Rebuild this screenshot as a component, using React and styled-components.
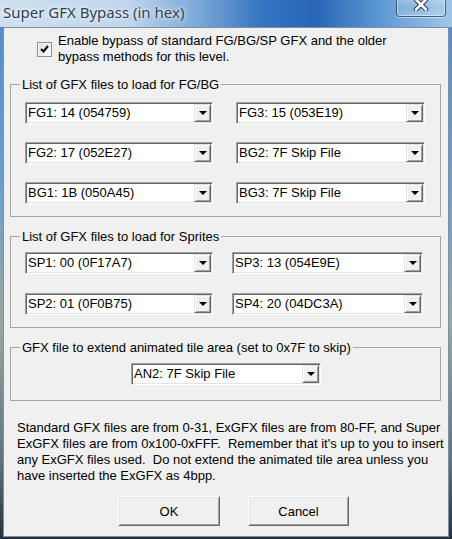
import React from "react";
import styled, { createGlobalStyle } from "styled-components";

const GlobalStyle = createGlobalStyle`
  *, *::before, *::after { box-sizing: border-box; }
  html, body { margin: 0; padding: 0; background: #5f8fbf; }
  body { font-family: "Liberation Sans", Arial, sans-serif; }
`;

const Window = styled.div`
  width: 452px;
  height: 539px;
  display: flex;
  flex-direction: column;
  padding: 0 3px 2px 3px;
  overflow: hidden;
  background: linear-gradient(180deg, #4f8ccb 0%, #6c9fcf 35%, #9aa79a 60%, #5f7585 85%, #24313c 100%);
`;

const TitleBar = styled.div`
  height: 27px;
  flex: none;
  margin: 0 -3px;
  padding: 0 3px;
  display: flex;
  justify-content: space-between;
  align-items: flex-start;
  background: linear-gradient(90deg, #cfe0f0 0%, #c0d6ec 28%, #7aa8d8 44%, #3474c0 58%, #2866b5 70%, #5d98d3 84%, #a0c7ea 100%);
`;

const Title = styled.span`
  font-family: "Noto Sans", "Open Sans", sans-serif;
  font-size: 15px;
  line-height: 24px;
  color: #2c3d50;
  text-shadow: 0 0 6px rgba(255, 255, 255, 0.9), 0 0 2px rgba(255, 255, 255, 0.9);
`;

const CloseButton = styled.div`
  width: 50px;
  height: 22px;
  margin-top: -5px;
  margin-right: 3px;
  padding-bottom: 4px;
  border: 1px solid rgba(25, 45, 75, 0.7);
  border-radius: 4px;
  box-shadow: inset 0 0 0 1px rgba(255, 255, 255, 0.45), 0 1px 0 rgba(255, 255, 255, 0.5);
  background: linear-gradient(180deg, rgba(255, 255, 255, 0.35), rgba(255, 255, 255, 0.12) 60%, rgba(255, 255, 255, 0.25));
  display: flex;
  align-items: center;
  justify-content: center;
`;

const Client = styled.div`
  flex: 1;
  display: flex;
  flex-direction: column;
  background: #f0f0f0;
  border: 1px solid #7d8fa3;
  padding: 5px 7px 0 6px;
  font-size: 13px;
  color: #000;
`;

const CheckRow = styled.label`
  display: flex;
  align-items: center;
  gap: 6px;
  padding-left: 27px;
`;

const CheckBox = styled.span`
  width: 15px;
  height: 15px;
  flex: none;
  border: 1px solid #8e8f8f;
  background: linear-gradient(135deg, #dcdcdc, #ffffff);
  box-shadow: inset 0 0 0 1px #f4f4f4;
  display: flex;
  align-items: center;
  justify-content: center;
`;

const CheckText = styled.span`
  line-height: 16px;
`;

const Group = styled.fieldset`
  margin: 12px 0 0 0;
  padding: ${(p) => p.$pt}px 14px ${(p) => p.$pb}px 14px;
  border: 1px solid #a5a5a5;
  min-width: 0;
  width: 431px;
`;

const Legend = styled.legend`
  margin-left: -5px;
  padding: 0 2px;
  line-height: 15px;
`;

const ComboGrid = styled.div`
  display: grid;
  grid-template-columns: ${(p) => p.$cols};
  column-gap: ${(p) => p.$colGap}px;
  row-gap: ${(p) => p.$rowGap}px;
`;

const Centered = styled.div`
  display: flex;
  justify-content: center;
  padding-left: 1px;
`;

const ComboBox = styled.div`
  width: ${(p) => p.$w}px;
  height: 22px;
  padding: 1px;
  display: flex;
  align-items: stretch;
  background: #fff;
  border: 1px solid;
  border-color: #a0a0a0 #ffffff #ffffff #a0a0a0;
  box-shadow: inset 1px 1px 0 #696969, inset -1px -1px 0 #e3e3e3;
`;

const ComboValue = styled.span`
  flex: 1;
  padding-left: 1px;
  line-height: 18px;
  white-space: nowrap;
  overflow: hidden;
`;

const DropButton = styled.span`
  width: 17px;
  flex: none;
  background: #f0f0f0;
  border: 1px solid;
  border-color: #e3e3e3 #696969 #696969 #e3e3e3;
  box-shadow: inset 1px 1px 0 #fff, inset -1px -1px 0 #a0a0a0;
  display: flex;
  align-items: center;
  justify-content: center;
`;

const Arrow = styled.span`
  width: 0;
  height: 0;
  border-left: 4px solid transparent;
  border-right: 4px solid transparent;
  border-top: 4px solid #000;
`;

const Note = styled.p`
  margin: 19px 0 0 0;
  padding-left: 7px;
  line-height: 16px;
  white-space: pre;
`;

const ButtonRow = styled.div`
  display: flex;
  gap: 28px;
  margin-top: 12px;
  padding-left: 108px;
`;

const Button = styled.button`
  width: ${(p) => p.$w}px;
  height: 30px;
  font-family: "Liberation Sans", Arial, sans-serif;
  font-size: 13px;
  color: #000;
  background: #f0f0f0;
  border: 1px solid;
  border-color: #ffffff #696969 #696969 #ffffff;
  box-shadow: inset 1px 1px 0 #e3e3e3, inset -1px -1px 0 #a0a0a0;
  padding: 0;
`;

const Combo = ({ value, w }) => (
  <ComboBox $w={w}>
    <ComboValue>{value}</ComboValue>
    <DropButton>
      <Arrow />
    </DropButton>
  </ComboBox>
);

const fgbg = [
  "FG1: 14 (054759)",
  "FG3: 15 (053E19)",
  "FG2: 17 (052E27)",
  "BG2: 7F Skip File",
  "BG1: 1B (050A45)",
  "BG3: 7F Skip File",
];

const sprites = [
  "SP1: 00 (0F17A7)",
  "SP3: 13 (054E9E)",
  "SP2: 01 (0F0B75)",
  "SP4: 20 (04DC3A)",
];

const note = `Standard GFX files are from 0-31, ExGFX files are from 80-FF, and Super
ExGFX files are from 0x100-0xFFF.  Remember that it's up to you to insert
any ExGFX files used.  Do not extend the animated tile area unless you
have inserted the ExGFX as 4bpp.`;

export default function App() {
  return (
    <>
      <GlobalStyle />
      <Window>
        <TitleBar>
          <Title>Super GFX Bypass (in hex)</Title>
          <CloseButton>
            <svg width="16" height="13" viewBox="0 0 16 13">
              <path d="M3 1.5 L13 11.5 M13 1.5 L3 11.5" stroke="#2a3a4e" strokeWidth="4.6" strokeLinecap="round" />
              <path d="M3 1.5 L13 11.5 M13 1.5 L3 11.5" stroke="#ffffff" strokeWidth="2.6" strokeLinecap="round" />
            </svg>
          </CloseButton>
        </TitleBar>
        <Client>
          <CheckRow>
            <CheckBox>
              <svg width="9" height="8" viewBox="0 0 9 8">
                <path d="M1 4 L3.5 6.5 L8 1" stroke="#000" strokeWidth="2" fill="none" />
              </svg>
            </CheckBox>
            <CheckText>
              Enable bypass of standard FG/BG/SP GFX and the older
              <br />
              bypass methods for this level.
            </CheckText>
          </CheckRow>

          <Group $pt={10} $pb={12}>
            <Legend>List of GFX files to load for FG/BG</Legend>
            <ComboGrid $cols="188px 189px" $colGap={23} $rowGap={18}>
              {fgbg.map((v) => (
                <Combo key={v} value={v} />
              ))}
            </ComboGrid>
          </Group>

          <Group $pt={8} $pb={12}>
            <Legend>List of GFX files to load for Sprites</Legend>
            <ComboGrid $cols="188px 191px" $colGap={19} $rowGap={19}>
              {sprites.map((v) => (
                <Combo key={v} value={v} />
              ))}
            </ComboGrid>
          </Group>

          <Group $pt={8} $pb={15}>
            <Legend>GFX file to extend animated tile area (set to 0x7F to skip)</Legend>
            <Centered>
              <Combo value="AN2: 7F Skip File" w={190} />
            </Centered>
          </Group>

          <Note>{note}</Note>

          <ButtonRow>
            <Button $w={102}>OK</Button>
            <Button $w={101}>Cancel</Button>
          </ButtonRow>
        </Client>
      </Window>
    </>
  );
}
